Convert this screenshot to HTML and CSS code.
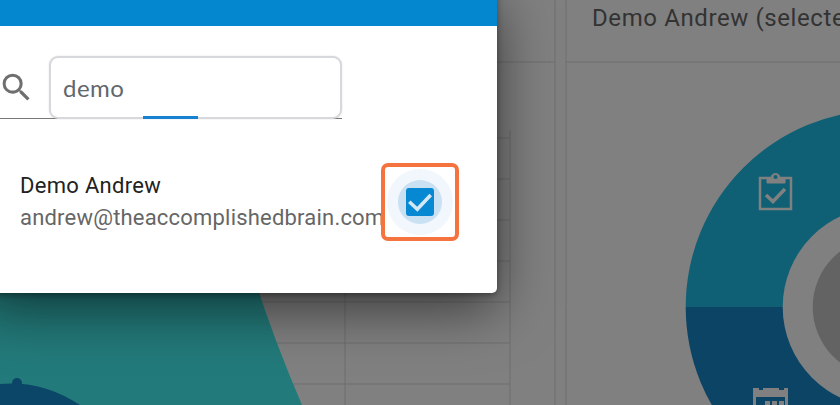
FILE: index.html
```html
<!DOCTYPE html>
<html>
<head>
    <title>Select User</title>
    <link rel="stylesheet" href="styles.css">
</head>
<body>

<div class="backdrop">
    <svg class="backdrop-art" width="840" height="405" viewBox="0 0 840 405">
        <g class="grid-line">
            <path d="M0 138H510M0 179H510M0 220H510M0 261H510M0 302H510M0 343H510M0 384H510"/>
            <path d="M345 130V405M510 130V405M555 0V405M566 0V405M0 62H555M566 62H840"/>
        </g>
        <path d="M0 280H255Q274 340 302 405H0Z" fill="#237a7a"/>
        <path d="M0 384Q42 380 80 405H0Z" fill="#0b4568"/>
        <circle cx="17" cy="383" r="5" fill="#0b4568"/>
        <path d="M882.7 110A197 197 0 0 0 685.7 307H782.7A100 100 0 0 1 882.7 207Z" fill="#0f6074"/>
        <path d="M685.7 307A197 197 0 0 0 882.7 504V407A100 100 0 0 1 782.7 307Z" fill="#0c4465"/>
        <circle cx="882.700" cy="307" r="70" fill="#636363"/>
        <g class="art-icon">
            <rect x="760" y="178" width="31" height="31"/>
            <path class="art-clip" d="M767 178V183H785V178H780A4.500 4.500 0 0 0 771 178Z"/>
            <circle cx="775.500" cy="177" r="2" fill="#0f6074"/>
            <path class="art-tick" d="M766 195L773 201.500L785 189"/>
        </g>
        <!-- calendar cut off by the bottom edge -->
        <path d="M753 405V388H759V390H763V388H779V390H784V388H788V405H785V397H756V405Z" fill="#808080"/>
        <path d="M765 405V401H770V405ZM772 405V401H777V405ZM779 405V401H784V405Z" fill="#808080"/>
    </svg>
    <div class="chart-title">Demo Andrew (selected</div>
</div>

<div class="dialog">
    <div class="dialog-header"></div>
    <div class="search-row">
        <svg class="search-icon" width="37" height="37" viewBox="0 0 24 24">
            <path d="M15.500 14h-.79l-.28-.27A6.470 6.470 0 0 0 16 9.500 6.500 6.500 0 1 0 9.500 16c1.610 0 3.090-.59 4.230-1.570l.27.28v.79l5 4.990L20.490 19l-4.990-5zm-6 0C7.010 14 5 11.990 5 9.500S7.010 5 9.500 5 14 7.010 14 9.500 11.990 14 9.500 14z"/>
        </svg>
        <div class="search-input">
            <span class="search-value">demo</span>
            <span class="search-focus"></span>
        </div>
    </div>
    <div class="user-row">
        <div class="user-info">
            <div class="user-name">Demo Andrew</div>
            <div class="user-email">andrew@theaccomplishedbrain.com</div>
        </div>
        <div class="check-halo">
            <div class="check-ring">
                <div class="check-box">
                    <svg width="28" height="28" viewBox="0 0 28 28">
                        <path d="M3.300 13.700L11.300 21.300L24.700 7" fill="none" stroke="#d5e8f6" stroke-width="3.500"/>
                    </svg>
                </div>
            </div>
        </div>
    </div>
</div>
<div class="highlight"></div>

</body>
</html>
```

FILE: styles.css
```css
html, body { margin: 0; height: 100%; }
body {
    width: 840px; height: 405px; overflow: hidden; position: relative;
    background: #808080; font-family: Roboto, sans-serif;
}
.backdrop { position: absolute; inset: 0; }
.backdrop-art { display: block; }
.grid-line path { fill: none; stroke: #6f6f6f; stroke-width: 1; }
.art-icon rect, .art-icon path { fill: none; stroke: #808080; stroke-width: 2.500; }
.art-icon .art-clip { fill: #808080; stroke-width: 1; }
.art-icon .art-tick { stroke-width: 3.500; }
.chart-title {
    position: absolute; left: 592px; top: 3px;
    font-size: 24px; line-height: 30px; letter-spacing: 0.6px; color: #333; white-space: nowrap;
}

/* dialog runs off the left side of the crop */
.dialog {
    position: absolute; left: -20px; top: -10px; width: 517px; height: 303px;
    background: white; border-radius: 0 0 5px 5px;
    box-shadow: 0 16px 55px rgba(0,0,0,0.55), 0 2px 6px rgba(0,0,0,0.35);
}
.dialog-header { height: 36px; background: #0487cf; }
.search-row {
    display: flex; align-items: center;
    margin-top: 30px; width: 362px; height: 62px;
    border-bottom: 1px solid #777;
}
.search-icon { fill: #6f6f6f; margin-left: 18px; margin-right: 14px; flex-shrink: 0; }
.search-input {
    position: relative; flex: 1; height: 63px; box-sizing: border-box;
    border: 2px solid #d6d8dc; border-radius: 9px; background: white;
    padding: 0 12px; display: flex; align-items: center;
    box-shadow: 0 0 2px rgba(0,0,0,0.12);
}
.search-value { font-family: Lato, sans-serif; font-size: 24px; color: #62666d; letter-spacing: 0.5px; }
.search-focus {
    position: absolute; left: 92px; bottom: -2px; width: 55px; height: 3px; background: #1583cf;
}
.user-row { display: flex; align-items: center; margin-top: 50px; padding-left: 40px; }
.user-info { width: 367px; }
.user-name { font-size: 22px; line-height: 32px; letter-spacing: 0.3px; color: #222; }
.user-email { font-size: 22px; line-height: 32px; letter-spacing: 0.2px; color: #666; white-space: nowrap; }
.check-halo {
    width: 66px; height: 66px; border-radius: 50%; background: #f1f7fd; flex-shrink: 0;
    display: flex; align-items: center; justify-content: center;
}
.check-ring {
    width: 44px; height: 44px; border-radius: 50%; background: #c9e1f3;
    display: flex; align-items: center; justify-content: center;
}
.check-box { width: 28px; height: 28px; border-radius: 3px; background: #0688d2; }
.check-box svg { display: block; }
.highlight {
    position: absolute; left: 381px; top: 163px; width: 78px; height: 78px; box-sizing: border-box;
    border: 4px solid #f4733e; border-radius: 7px;
}
```
